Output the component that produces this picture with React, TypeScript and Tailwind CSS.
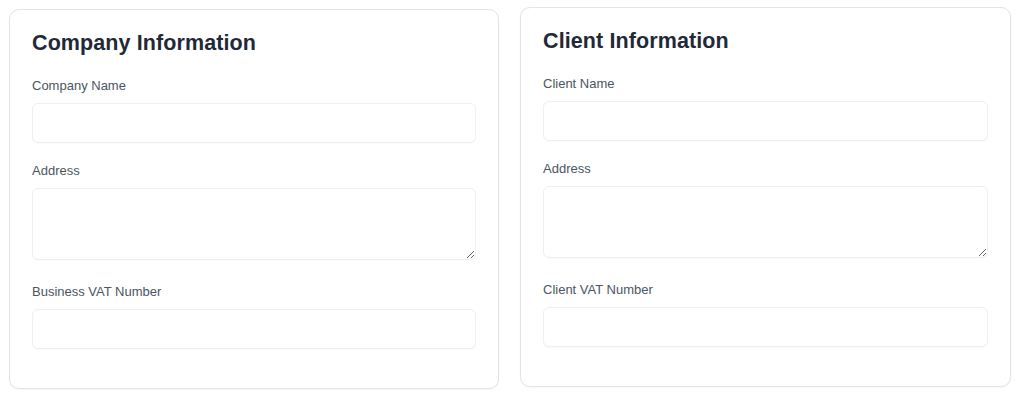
import React from "react";

type Field = { label: string; multiline?: boolean };

const font = { fontFamily: '"Liberation Sans", Arial, sans-serif' };

function InfoCard({ title, fields, className }: { title: string; fields: Field[]; className?: string }) {
  return (
    <div
      className={
        "w-[490px] h-[380px] shrink-0 rounded-[10px] border border-[#e3e3e3] bg-white px-[22px] pt-[19px] shadow-[0_1px_2px_rgba(0,0,0,0.04)] " +
        (className ?? "")
      }
    >
      <h2 className="text-[21.5px] leading-[28px] font-bold tracking-[0.1px] text-[#1f2937]">{title}</h2>

      <div className="mt-[18px] flex flex-col">
        {fields.map((f, i) => (
          <div key={f.label} className={i === 0 ? "" : f.multiline ? "mt-[17px]" : "mt-[21px]"}>
            <label className="block pt-px text-[13px] leading-[20px] text-[#4b5563]">{f.label}</label>
            {f.multiline ? (
              <textarea
                className="mt-[7px] block w-full h-[72px] rounded-[6px] border border-[#efefef] bg-white outline-none shadow-[0_1px_1px_rgba(0,0,0,0.02)]"
              />
            ) : (
              <input
                type="text"
                className="mt-[7px] block w-full h-[40px] rounded-[6px] border border-[#efefef] bg-white outline-none shadow-[0_1px_1px_rgba(0,0,0,0.02)]"
              />
            )}
          </div>
        ))}
      </div>
    </div>
  );
}

export default function App() {
  return (
    <div style={font} className="w-[1024px] h-[397px] bg-white flex items-start gap-[21px] pl-[9px] pt-[7px]">
      <InfoCard
        className="mt-[2px]"
        title="Company Information"
        fields={[{ label: "Company Name" }, { label: "Address", multiline: true }, { label: "Business VAT Number" }]}
      />
      <InfoCard
        className="w-[491px]"
        title="Client Information"
        fields={[{ label: "Client Name" }, { label: "Address", multiline: true }, { label: "Client VAT Number" }]}
      />
    </div>
  );
}
